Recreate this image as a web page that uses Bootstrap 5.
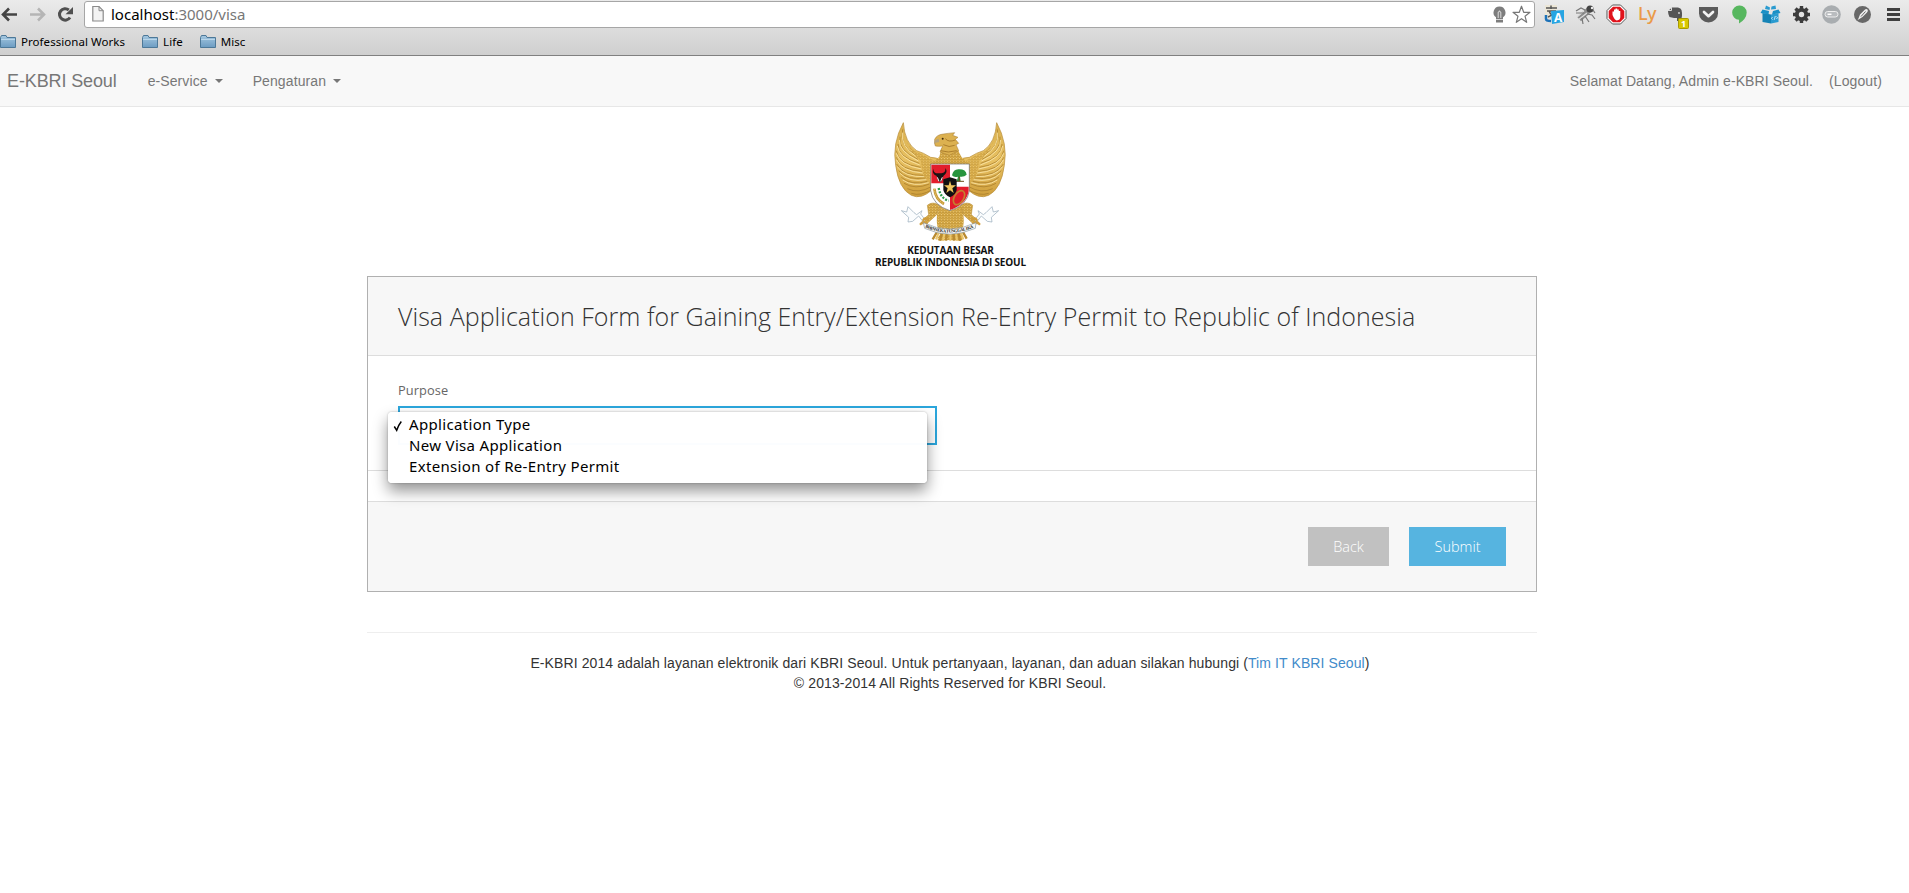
<!DOCTYPE html>
<html lang="id">
<head>
<meta charset="utf-8">
<title>E-KBRI Seoul</title>
<link href="https://cdn.jsdelivr.net/npm/bootstrap@5.3.0/dist/css/bootstrap.min.css" rel="stylesheet">
<script src="https://cdn.jsdelivr.net/npm/bootstrap@5.3.0/dist/js/bootstrap.bundle.min.js"></script>
<style>
body{font-family:"Liberation Sans",Arial,sans-serif;font-size:14px;line-height:20px;color:#333;background:#fff;letter-spacing:.1px}
.chrome{height:56px;background:linear-gradient(#ebebeb,#cfcfcf);border-bottom:1px solid #808080;font-family:"Noto Sans","Open Sans",sans-serif;overflow:hidden}
.toolbar-row{height:28px}
svg{display:block;flex:none}
.nav-icons{width:84px}
.omnibox{height:27px;margin-top:1px;background:#fff;border:1px solid #a6a6a6;border-radius:3px;padding:0 0 2px 7px;font-size:15px;letter-spacing:0;color:#777}
.omnibox b{font-weight:400;color:#000}
.page-icon{margin-right:7px}
.ext{width:374px;padding-left:4px}
.ext>span{width:31px;height:28px;padding-top:1px}
.ly{font-size:18px;font-weight:500;line-height:1;letter-spacing:-.6px;color:#ea9a48}
.bookmarks{height:27px;font-size:11.5px;letter-spacing:.05px;color:#000}
.bookmarks>span{gap:5px;margin-right:17px}
.site-nav{height:51px;background:#f8f8f8;border-bottom:1px solid #e7e7e7;padding:0 27px 1px 7px}
.site-nav,.site-nav a{color:#777;text-decoration:none}
.site-nav .navbar-brand{font-size:18px;letter-spacing:-.12px;margin:0 31px 0 0;padding:0}
.caret{border-top:4px solid #777;border-left:4px solid transparent;border-right:4px solid transparent;margin-left:7px}
.menu-gap{margin-right:30px}
.page{width:1170px;margin-left:367px}
.caption{font:700 10px/12.4px "Open Sans",sans-serif;letter-spacing:-.17px;color:#111;margin-top:2px}
.emblem{height:169px;padding:11px 3px 0 0}
.panel{border:1px solid #b0b0b0;height:316px}
.panel-top{height:79px;background:#f7f7f7;border-bottom:1px solid #ddd;padding:0 30px}
.panel-top h1{font:300 25px/78px "Open Sans",sans-serif;letter-spacing:.04px;color:#333;margin:0;white-space:nowrap}
.fieldrow{height:115px;border-bottom:1px solid #ddd;padding:25px 30px 0}
.fieldrow label{font:400 12.8px/18px "Open Sans",sans-serif;color:#666;display:block}
.picker{width:539px;height:39px;border:2px solid #2ba6dc;margin-top:7px}
.options{left:-12px;top:4px;width:539px;height:71px;background:rgba(255,255,255,.98);border-radius:4px;box-shadow:0 8px 15px rgba(0,0,0,.42),0 0 2px rgba(0,0,0,.3);color:#000;font:15px/21px "Noto Sans",sans-serif;letter-spacing:.33px;padding:2px 0 0 21px;z-index:2}
.tick{left:5px;top:8px}
.gap-row{height:31px;border-bottom:1px solid #ddd}
.panel-foot{height:89px;background:#f7f7f7;padding:0 30px;gap:20px}
.panel-foot .btn{border:0;border-radius:0;height:39px;font:300 14.5px/38px "Open Sans",sans-serif;color:#fff;padding:0}
.panel-foot .back-btn{width:81px;background:#c1c1c1}
.panel-foot .send-btn{width:97px;background:#56b4e0}
.foot{margin-top:40px;border-top:1px solid #eee;padding:20px 4px 0 0}
.foot a{color:#428bca;text-decoration:none}
</style>
</head>
<body>
<svg width="0" height="0" class="position-absolute"><defs>
<linearGradient id="fg" x2="0" y2="1"><stop stop-color="#a4c7e0"/><stop offset="1" stop-color="#6c9cc2"/></linearGradient>
<linearGradient id="gold" x2="0" y2="1"><stop stop-color="#d8ae4c"/><stop offset=".5" stop-color="#e8c163"/><stop offset="1" stop-color="#cf9f3c"/></linearGradient>
<pattern id="scale" width="9" height="8" patternUnits="userSpaceOnUse"><rect width="9" height="8" fill="#dcb04c"/><path d="M0 2Q4.500 9 9 2" fill="none" stroke="#95691f" stroke-width="1.500"/><path d="M3 1h3" stroke="#f6dc92" stroke-width="2"/></pattern>
<symbol id="folder" viewBox="0 0 16 14"><path d="M.5 12.500V2.500L1.500 .5H6L7 2.500H15.500V12.500z" fill="url(#fg)" stroke="#4d7898"/><path d="M1 4.500H15" stroke="#b9d6ea"/></symbol>
</defs></svg>

<header class="chrome">
  <div class="toolbar-row d-flex">
    <div class="nav-icons d-flex">
      <svg width="84" height="28" fill="none" stroke-width="2.600"><path d="M17 14.500H3.500M9 8.500L3 14.500L9 20.500" stroke="#444"/><path d="M30 14.500H43.500M38 8.500L44 14.500L38 20.500" stroke="#b5b5b5"/><path d="M70 17.500A5.700 5.700 0 1 1 68.800 10" stroke="#505050" stroke-width="3"/><path d="M73 7V14.300H65.500z" fill="#505050"/></svg>
    </div>
    <div class="omnibox d-flex align-items-center flex-grow-1">
      <svg class="page-icon" width="12" height="17" viewBox="0 0 12 17"><path d="M.8 1.500H7L11.200 5.700V16H.8z" fill="#f3f3f3" stroke="#8a8a8a" stroke-width="1.200"/><path d="M7 1.500V5.700H11.200" fill="none" stroke="#8a8a8a"/></svg>
      <span class="flex-grow-1"><b>localhost</b>:3000/visa</span>
      <svg width="42" height="24" viewBox="0 0 42 24"><path d="M7.500 4.500A6.200 6 0 0 0 4 15.300V20.500H11V15.300A6.200 6 0 0 0 7.500 4.500z" fill="#7d7d7d"/><path d="M6.200 16V10.500l1.300-1.500 1.300 1.500V16M4 17.500H11" fill="none" stroke="#d5d5d5" stroke-width="1.100"/><path d="M29.500 4.200L31.700 10.300H38L33 14.200L34.700 20.300L29.500 16.700L24.300 20.300L26 14.200L21 10.300H27.300z" fill="#fff" stroke="#777" stroke-width="1.200" stroke-linejoin="round"/></svg>
    </div>
    <div class="ext d-flex">
      <span class="d-flex align-items-center justify-content-center"><svg width="21" height="21" viewBox="0 0 21 21"><rect x="1" y="1" width="12" height="13" fill="#ece6d6"/><path d="M2 4H13M7 1.500V5M3 7H12M5 7Q7 12 12 13M11 7Q9 11 4 13" stroke="#555" stroke-width="1.500" fill="none"/><path d="M2 11v4q0 2 5 2" fill="none" stroke="#1d72b8" stroke-width="2.500"/><path d="M7 7L20 6V18L8 20z" fill="#27a5e2"/><text x="10" y="17.500" font-size="12" font-weight="700" fill="#fff">A</text></svg></span>
      <span class="d-flex align-items-center justify-content-center"><svg width="21" height="21" viewBox="0 0 21 21" fill="none" stroke="#777"><path d="M4 15L14 6" stroke-width="6" stroke="#8c8c8c"/><path d="M3 16L12 9M2 13L9 7" stroke="#ddd" stroke-width="1.200"/><circle cx="15" cy="5" r="3.500" fill="#444" stroke="none"/><path d="M10 6L6 4L1 7M9 9L1 9M12 10L17 11L20 15M10 12L14 18M7 14L8 20M18 6L20 9" stroke-width="1.200"/><circle cx="17" cy="4" r="1.200" fill="#eee" stroke="none"/></svg></span>
      <span class="d-flex align-items-center justify-content-center"><svg width="21" height="21" viewBox="0 0 21 21"><path d="M6.500 1H14.500L20 6.500V14.500L14.500 20H6.500L1 14.500V6.500z" fill="#fff" stroke="#555"/><path d="M7 2.700H14L18.300 7V14L14 18.300H7L2.700 14V7z" fill="#e0131c"/><path d="M6.500 11V7.500h1.500V5.500H9.500V4.500h1.700V5.500h1.600V7h1.500v6q0 3-3.500 3.500Q8.500 16 6.500 11z" fill="#fff"/></svg></span>
      <span class="d-flex align-items-center justify-content-center pb-1 ly">Ly</span>
      <span class="d-flex align-items-center justify-content-center"><svg width="24" height="28" viewBox="0 0 24 28"><path d="M2 10L6 6.500H12Q15 7 15.500 9Q17 15 14.500 20H11V17H8L3.500 16Q2 13 2 10z" fill="#555"/><path d="M2 9.500H5.500V6" stroke="#ddd" fill="none"/><circle cx="13" cy="12" r=".9" fill="#ddd"/><rect x="12.500" y="17.500" width="10" height="10" rx="1" fill="#d8c800" stroke="#a79a00"/><text x="15" y="25.800" font-size="9" font-weight="700" fill="#fff">1</text></svg></span>
      <span class="d-flex align-items-center justify-content-center"><svg width="21" height="21" viewBox="0 0 21 21"><path d="M1 3H20V9.500A9.500 9 0 0 1 1 9.500z" fill="#5b5b5b"/><path d="M6 8L10.500 12.200L15 8" fill="none" stroke="#f2f2f2" stroke-width="2.700" stroke-linecap="round" stroke-linejoin="round"/></svg></span>
      <span class="d-flex align-items-center justify-content-center"><svg width="21" height="21" viewBox="0 0 21 21"><path d="M10.500 1.500A7 7 0 0 1 17.700 8.500Q17.500 15 10 19.500V15.700A7 7 0 0 1 10.500 1.500z" fill="#57b75f"/></svg></span>
      <span class="d-flex align-items-center justify-content-center"><svg width="21" height="21" viewBox="0 0 21 21"><path d="M2.500 9L11 10.500V19.500L2.500 18z" fill="#1583b5"/><path d="M11 10.500L18.500 9V18L11 19.500z" fill="#2a9bd0"/><path d="M.5 9L2.500 5.500L9 7L8.500 10.500zM12 10.500L13 7L18.500 5.500L20.500 9z" fill="#1b90c6"/><path d="M5 5L6 1.500L10 3.500L9.500 6zM11 5.500L11.500 2.500L15.500 1.500L16 5z" fill="#2a9bd0"/><path d="M12.500 13l-1 1.500 1 1M16.500 12.500l1 1-1 1.500M15.300 12l-1 3.800" stroke="#e8f6fc" fill="none" stroke-width=".8"/></svg></span>
      <span class="d-flex align-items-center justify-content-center"><svg width="21" height="21" viewBox="0 0 21 21"><circle cx="10.500" cy="10.500" r="4.600" fill="none" stroke="#3c3c3c" stroke-width="4"/><g stroke="#3c3c3c" stroke-width="3.400"><path d="M10.500 2V19M2 10.500H19M4.500 4.500L16.500 16.500M16.500 4.500L4.500 16.500"/></g><circle cx="10.500" cy="10.500" r="2.700" fill="#e3e3e3"/></svg></span>
      <span class="d-flex align-items-center justify-content-center"><svg width="21" height="21" viewBox="0 0 21 21"><circle cx="10.500" cy="10.500" r="9.300" fill="#a9adb0"/><rect x="4" y="7.500" width="13" height="5.500" rx="2.700" fill="#b9bcbf" stroke="#eee"/><path d="M6.500 10.300h4" stroke="#fff" stroke-width="1.500"/></svg></span>
      <span class="d-flex align-items-center justify-content-center"><svg width="21" height="21" viewBox="0 0 21 21"><circle cx="10.500" cy="10.500" r="8.500" fill="#686868"/><path d="M6 15.500L8 10.500L12.500 6Q14 4.500 15.500 5.500Q16.500 7 15 8.500L10.500 13L5 16.500" fill="#eee"/><path d="M9 12.500L13.500 7.500" stroke="#686868"/></svg></span>
      <span class="d-flex align-items-center justify-content-center"><svg width="15" height="15" viewBox="0 0 15 15"><path d="M1 2.500H14M1 7.500H14M1 12.500H14" stroke="#3f3f3f" stroke-width="3"/></svg></span>
    </div>
  </div>
  <div class="bookmarks d-flex align-items-center">
    <span class="d-flex align-items-center"><svg width="16" height="14"><use href="#folder"/></svg>Professional Works</span>
    <span class="d-flex align-items-center"><svg width="16" height="14"><use href="#folder"/></svg>Life</span>
    <span class="d-flex align-items-center"><svg width="16" height="14"><use href="#folder"/></svg>Misc</span>
  </div>
</header>

<nav class="site-nav d-flex align-items-center">
  <a class="navbar-brand" href="#">E-KBRI Seoul</a>
  <a class="d-flex align-items-center menu-gap" href="#">e-Service<span class="caret"></span></a>
  <a class="d-flex align-items-center" href="#">Pengaturan<span class="caret"></span></a>
  <span class="ms-auto me-3">Selamat Datang, Admin e-KBRI Seoul.</span>
  <a href="#">(Logout)</a>
</nav>

<main class="page">
  <div class="emblem d-flex flex-column align-items-center text-center">
    <svg width="130" height="124" viewBox="0 0 390 372">
      <path d="M168 240Q140 300 162 350Q150 362 158 368L190 366L224 368Q236 362 224 350Q246 300 216 240z" fill="url(#scale)"/>
      <path d="M160 330L140 364M172 330L162 368M185 330L180 368M202 330L204 368M214 330L222 368M224 330L242 362" stroke="#b98a30" stroke-width="7"/>
      <path d="M164 330L150 364M178 330L171 368M194 330L193 368M208 330L213 368M220 330L232 364" stroke="#ecc66a" stroke-width="6"/>
      <g id="wing">
        <path d="M52 14Q18 76 29 142Q38 212 76 232Q106 246 140 214L140 140L166 128Q152 118 134 118Q112 104 92 98Q56 74 52 14z" fill="url(#gold)" stroke="#b58a34" stroke-width="2"/>
        <path d="M50 34Q38 84 92 112M42 56Q34 96 96 124M36 78Q34 116 100 136M31 98Q36 138 104 148M31 118Q42 156 108 160M32 138Q50 174 112 172M38 158Q62 188 118 180M46 178Q76 204 124 190M54 196Q88 216 130 198M64 212Q98 228 136 206M76 226Q104 236 140 214" fill="none" stroke="#a37928" stroke-width="2"/>
        <path d="M50 44Q42 84 92 117M40 66Q38 100 97 129M34 84Q39 120 101 141M31 106Q42 142 106 153M32 126Q48 160 110 165M34 146Q56 178 116 176M42 166Q68 194 121 185M50 186Q82 208 128 194" fill="none" stroke="#fbe7a9" stroke-width="2.500"/>
        <path d="M60 66Q74 100 106 108L146 128L136 142V188L114 178L104 128Q76 108 60 66z" fill="url(#scale)" opacity=".7"/>
        <path d="M124 262Q140 248 160 262L152 290L124 316L106 318L112 304L128 290z" fill="url(#scale)" stroke="#b58a34" stroke-width="1.500"/>
        <path d="M112 312L98 294L80 310L66 312L68 298L46 278L62 282L66 266L84 284L92 290L108 278L104 288L118 306z" fill="#fbfdfe" stroke="#93a8b8" stroke-width="2"/>
        <path d="M112 306Q116 298 126 304M104 318Q112 308 122 316" fill="none" stroke="#cf9c3b" stroke-width="7" stroke-linecap="round"/>
      </g>
      <use href="#wing" transform="matrix(-1 0 0 1 384 0)"/>
      <path d="M166 92L160 116L134 140H250L226 116L214 92z" fill="url(#scale)"/>
      <path d="M146 64Q152 50 172 48Q184 46 206 44L200 52L216 58L208 64L218 76L210 80L218 98L190 112L162 102L170 84Q158 86 148 84L146 76z" fill="#dcb150" stroke="#a07528" stroke-width="1.500"/>
      <path d="M145 80Q142 64 158 62L160 72L148 74z" fill="#b5a27e"/><circle cx="170" cy="62" r="3" fill="#402b0d"/>
      <path d="M178 62Q188 74 208 66M172 80Q190 90 206 82M164 98Q186 106 212 98" fill="none" stroke="#936419" stroke-width="2"/>
      <path d="M134 138H250V218Q244 262 192 278Q140 262 134 218z" fill="#fff" stroke="#666" stroke-width="2"/>
      <path d="M136 140H192V196H136zM192 206H248V218Q242 258 192 276z" fill="#e21d2c"/>
      <path d="M142 152Q142 166 156 166H166Q180 164 178 150Q188 162 172 174L168 186Q162 198 156 186L152 174Q136 166 142 152z" fill="#181414"/><path d="M154 178l5 12M169 178l-5 12" stroke="#fff" stroke-width="3"/>
      <path d="M198 172Q202 152 220 154Q240 154 242 170Q234 178 222 176L224 190H212L216 176Q204 180 198 172z" fill="#27953e"/><path d="M208 190H234M220 176V190" stroke="#6b5020" stroke-width="3"/>
      <ellipse cx="219" cy="239" rx="14" ry="23" transform="rotate(32 219 239)" fill="none" stroke="#c4812f" stroke-width="5"/>
      <path d="M145 212Q148 244 174 258" fill="none" stroke="#c99b36" stroke-width="8"/><path d="M145 212Q148 244 174 258" fill="none" stroke="#f0dc9d" stroke-width="2" stroke-dasharray="4 3"/>
      <path d="M158 210Q164 242 188 248" fill="none" stroke="#2e9d4c" stroke-width="7" stroke-dasharray="6 4"/>
      <path d="M172 184L192 178L212 184V216Q208 232 192 238Q176 232 172 216z" fill="#111"/>
      <path d="M192 188L196 202H210L199 211L203 225L192 217L181 225L185 211L174 202H188z" fill="#efc45c"/>
      <path d="M112 314Q190 352 270 314L268 331Q190 366 116 331z" fill="#f8f8f6" stroke="#8b98a2" stroke-width="2"/>
      <path id="ribtext" d="M117 328Q190 360 268 327" fill="none"/>
      <text font-family="Liberation Serif,serif" font-size="13.500" font-weight="700" fill="#222" letter-spacing="0"><textPath href="#ribtext" textLength="150">BHINNEKA TUNGGAL IKA</textPath></text>
    </svg>
    <div class="caption">KEDUTAAN BESAR<br>REPUBLIK INDONESIA DI SEOUL</div>
  </div>

  <section class="panel">
    <div class="panel-top"><h1>Visa Application Form for Gaining Entry/Extension Re-Entry Permit to Republic of Indonesia</h1></div>
    <div class="fieldrow">
      <label>Purpose</label>
      <div class="picker position-relative">
        <div class="options position-absolute">
          <svg class="tick position-absolute" width="10" height="12" viewBox="0 0 10 12"><path d="M1.300 6.500L3.700 10.300Q5.500 5 8.300 1.500" fill="none" stroke="#000" stroke-width="1.500"/></svg>
          <div>Application Type</div>
          <div>New Visa Application</div>
          <div>Extension of Re-Entry Permit</div>
        </div>
      </div>
    </div>
    <div class="gap-row"></div>
    <div class="panel-foot d-flex align-items-center justify-content-end">
      <button class="btn back-btn">Back</button>
      <button class="btn send-btn">Submit</button>
    </div>
  </section>

  <footer class="foot text-center">
    E-KBRI 2014 adalah layanan elektronik dari KBRI Seoul. Untuk pertanyaan, layanan, dan aduan silakan hubungi (<a href="#">Tim IT KBRI Seoul</a>)<br>
    © 2013-2014 All Rights Reserved for KBRI Seoul.
  </footer>
</main>
</body>
</html>
